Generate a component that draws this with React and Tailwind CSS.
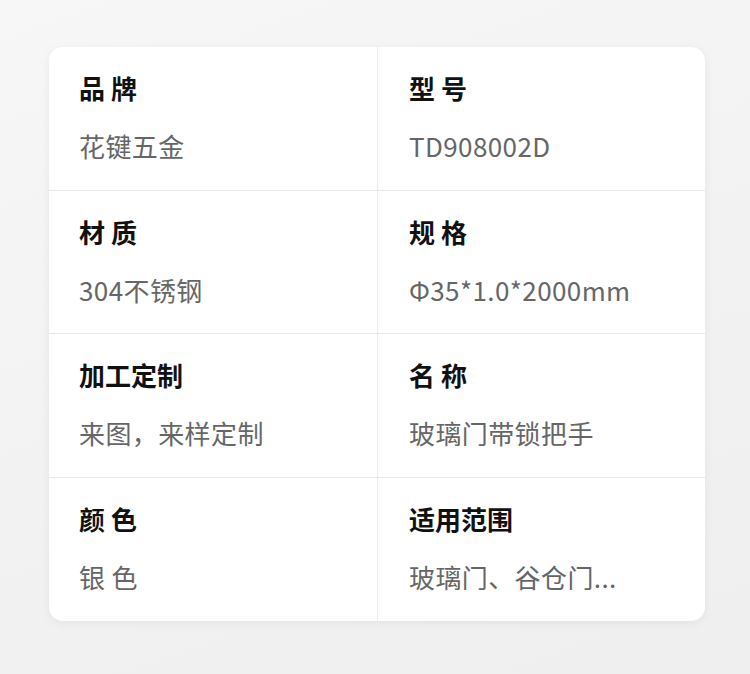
export default function App() {
  const rows = [
    [["品 牌", "花键五金"], ["型 号", "TD908002D"]],
    [["材 质", "304不锈钢"], ["规 格", "Φ35*1.0*2000mm"]],
    [["加工定制", "来图，来样定制"], ["名 称", "玻璃门带锁把手"]],
    [["颜 色", "银 色"], ["适用范围", "玻璃门、谷仓门..."]],
  ];
  return (
    <div
      className="w-[750px] h-[674px] bg-[linear-gradient(160deg,#f7f7f7_0%,#f2f2f2_50%,#efefef_100%)] pt-[47px] pl-[49px]"
      style={{ fontFamily: '"Noto Sans CJK SC", "Noto Sans", sans-serif' }}
    >
      <div className="w-[656px] bg-white rounded-[14px] shadow-[0_2px_10px_rgba(0,0,0,0.06)] overflow-hidden">
        {rows.map((row, i) => (
          <div
            key={i}
            className={`grid grid-cols-2 ${i < 2 ? "h-[143px]" : "h-[144px]"} ${i > 0 ? "border-t border-[#e8e8e8]" : ""}`}
          >
            {row.map(([label, value], j) => (
              <div
                key={j}
                className={`pt-[25px] ${j === 1 ? "border-l border-[#ececec] pl-[31px]" : "pl-[30px]"}`}
              >
                <div className="text-[26px] leading-[32px] font-bold text-[#111]">{label}</div>
                <div className="mt-[26px] text-[26px] leading-[32px] tracking-[0.4px] text-[#666]">{value}</div>
              </div>
            ))}
          </div>
        ))}
      </div>
    </div>
  );
}
